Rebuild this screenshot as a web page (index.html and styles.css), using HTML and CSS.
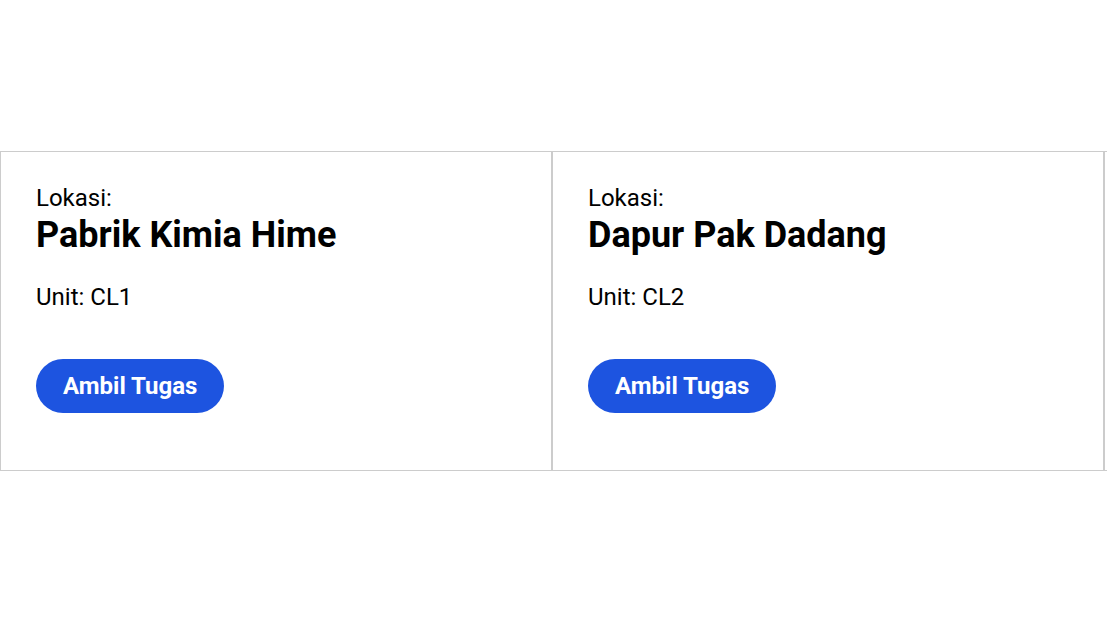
FILE: index.html
```html
<!DOCTYPE html>
<html lang="id">
<head>
<meta charset="utf-8">
<title>Tugas</title>
<link rel="stylesheet" href="styles.css">
</head>
<body>
<main class="board">
  <section class="card">
    <p class="label">Lokasi:</p>
    <h2 class="title">Pabrik Kimia Hime</h2>
    <p class="unit">Unit: CL1</p>
    <button class="btn" type="button">Ambil Tugas</button>
  </section>
  <section class="card">
    <p class="label">Lokasi:</p>
    <h2 class="title">Dapur Pak Dadang</h2>
    <p class="unit">Unit: CL2</p>
    <button class="btn" type="button">Ambil Tugas</button>
  </section>
  <section class="card card-hidden" aria-hidden="true"></section>
</main>
</body>
</html>
```
FILE: styles.css
```css
html, body {
  margin: 0;
  padding: 0;
  background: #fff;
  overflow: hidden;
}
body {
  font-family: Roboto, "Liberation Sans", sans-serif;
  color: #000;
}
.board {
  display: flex;
  align-items: center;
  height: 100vh;
}
.card {
  flex: 0 0 552px;
  box-sizing: border-box;
  height: 320px;
  border: 1px solid #cccccc;
  padding: 32px 35px 0;
  display: flex;
  flex-direction: column;
  align-items: flex-start;
}
.label {
  margin: 0;
  font-size: 24px;
  line-height: normal;
}
.title {
  margin: 2px 0 0;
  font-size: 36px;
  font-weight: 700;
  line-height: normal;
}
.unit {
  margin: 27px 0 0;
  font-size: 24px;
  line-height: normal;
}
.btn {
  margin-top: 48px;
  height: 54px;
  padding: 0 27px;
  border: none;
  border-radius: 27px;
  background: #1d54e0;
  color: #fff;
  font-family: Roboto, "Liberation Sans", sans-serif;
  font-size: 24px;
  font-weight: 700;
  cursor: pointer;
}
```
